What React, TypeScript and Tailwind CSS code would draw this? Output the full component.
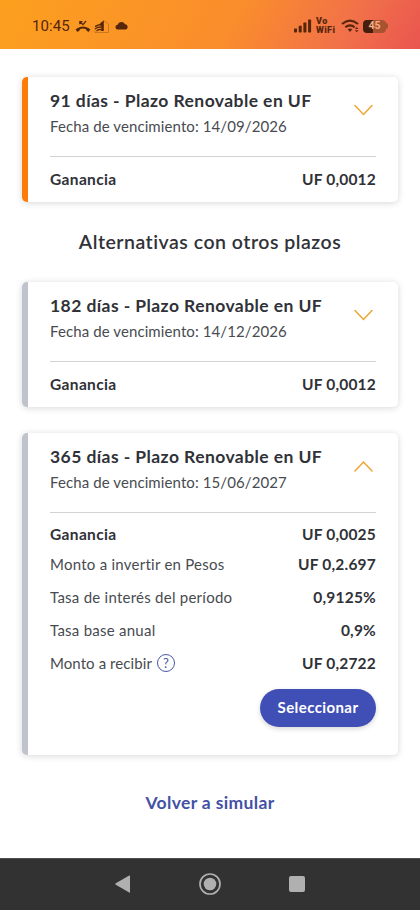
import type { ReactNode } from 'react';

function StatusBar() {
  return (
    <header className="flex h-[49px] items-start justify-between bg-[linear-gradient(120deg,#fca01e_0%,#fa8d2c_55%,#f1704a_82%,#e9554f_100%)] pl-8 pr-8 pt-4 text-[#55260c]">
      <div className="flex h-5 items-center">
        <span className="w-[38px] whitespace-nowrap font-[Roboto] text-[15px] leading-5 tracking-[0.1px]">10:45</span>
        <svg className="ml-[5px]" width="16" height="16" viewBox="0 0 16 16" fill="none" stroke="currentColor">
          <path d="M2.5 11.6Q8 7.4 13.5 11.6" strokeWidth="2" />
          <path d="m.8 11.6 2.5-1.7 1.5 2.1-2.3 1.8ZM15.2 11.6l-2.5-1.7-1.5 2.1 2.3 1.8Z" fill="currentColor" strokeWidth=".4" />
          <path d="m5 4 3 2.7 3-3.7M4.8 6.2V3.6h2.7" strokeWidth="1.2" />
        </svg>
        <svg className="ml-[3px]" width="16" height="16" viewBox="0 0 16 16" fill="none" stroke="currentColor">
          <path d="m9 2 5.5 4v8.5H1v-2" stroke="#b86a1c" strokeWidth=".7" />
          <path d="M6.3 5 9.8 2.4V13H7.2V7.5L6.3 8Z" fill="currentColor" stroke="none" />
          <path d="m1 8.6 3-1.5 3-.6M.8 11l3-1.6 3.5-.4M2.5 13l2-1.3 3-.2" strokeWidth="1.3" />
        </svg>
        <svg className="ml-[5px]" width="14" height="10" viewBox="0 0 14 10" fill="currentColor">
          <path d="M3 8.5a2.3 2.3 0 0 1-.4-4.7A4 4 0 0 1 10 3.3a2.7 2.7 0 0 1 1 5.2Z" />
        </svg>
      </div>
      <div className="flex h-5 items-center">
        <svg width="18" height="14" viewBox="0 0 18 14" fill="currentColor">
          <rect x="0" y="9.5" width="3" height="4" rx=".7" />
          <rect x="4.7" y="6.8" width="3" height="6.7" rx=".7" />
          <rect x="9.4" y="3.6" width="3" height="9.9" rx=".7" />
          <rect x="14.1" y=".5" width="3" height="13" rx=".7" />
        </svg>
        <div className="ml-1 flex w-[22px] flex-col whitespace-nowrap pb-px font-[Roboto] text-[9px] font-black leading-[9px] tracking-[0.4px]">
          <span>Vo</span>
          <span>WiFi</span>
        </div>
        <svg className="ml-[3px]" width="19" height="14" viewBox="0 0 19 14" fill="none" stroke="currentColor">
          <path d="M1 5Q9-1.8 17 5M4.3 8.3Q9 4.5 13.7 8.3" strokeWidth="2.1" />
          <path d="M6.7 10.2Q9 8.6 11.3 10.2L9 13Z" fill="currentColor" stroke="none" />
          <path d="m14 10 1.7-2 1.7 2ZM14 11.3l1.7 2 1.7-2Z" fill="currentColor" stroke="none" />
        </svg>
        <div className="ml-[3px] flex items-center">
          <span className="flex h-[13px] w-[23px] items-center justify-center rounded-[4px] bg-[linear-gradient(90deg,#431e0c_45%,#a75331_45%)] font-[Roboto] text-[10.5px] font-bold leading-none text-[#f5ad82]">45</span>
          <span className="h-[6px] w-[2px] rounded-r-full bg-[#a75331]" />
        </div>
      </div>
    </header>
  );
}

function Row({ label, value, strong = false }: { label: ReactNode; value: string; strong?: boolean }) {
  return (
    <div className="flex items-center justify-between whitespace-nowrap text-[15px] leading-5">
      <span className={strong ? 'text-[15.5px] font-bold tracking-[0.35px]' : 'tracking-[0.25px] text-[#484b50]'}>{label}</span>
      <span className="text-[15.5px] font-bold tracking-[0.2px]">{value}</span>
    </div>
  );
}

type CardProps = { days: string; date: string; gain: string; active?: boolean; open?: boolean; children?: ReactNode };

function Card({ days, date, gain, active = false, open = false, children }: CardProps) {
  return (
    <section className={`rounded-[5px] border-l-[6px] bg-white pl-[22px] pr-[22px] pt-[11px] shadow-[0_1px_7px_rgba(0,0,0,0.16)] ${active ? 'border-[#fd7c08]' : 'border-[#bfc4cc]'} ${open ? 'h-[322px]' : 'h-[125px]'}`}>
      <div className="flex h-[69px] justify-between border-b border-[#d2d3d5]">
        <div className="whitespace-nowrap">
          <h2 className="text-[17.5px] font-bold leading-[26px] tracking-[0.42px]">{days} días - Plazo Renovable en UF</h2>
          <p className="text-[15px] leading-[24px] tracking-[0.1px] text-[#484b50]">Fecha de vencimiento: {date}</p>
        </div>
        <svg className="mr-[3.5px] mt-4 shrink-0" width="19" height="12" viewBox="0 0 19 12" fill="none" stroke="#eda532" strokeWidth="1.5" strokeLinecap="round">
          <path d={open ? 'm1 11 8.5-9L18 11' : 'm1 1.5 8.5 9 8.5-9'} />
        </svg>
      </div>
      <div className={open ? 'pt-[11px]' : 'pt-3'}>
        <Row label="Ganancia" value={gain} strong />
      </div>
      {children}
    </section>
  );
}

export default function App() {
  return (
    <div className="flex h-[910px] w-[420px] flex-col overflow-hidden bg-white font-[Lato,sans-serif] text-[#303238]">
      <StatusBar />
      <main className="flex-1 px-[22px] pt-7">
        <Card days="91" date="14/09/2026" gain="UF 0,0012" active />
        <h1 className="flex h-20 items-center justify-center whitespace-nowrap pb-px text-[19.5px] font-semibold tracking-[0.5px]">Alternativas con otros plazos</h1>
        <Card days="182" date="14/12/2026" gain="UF 0,0012" />
        <div className="h-[26px]" />
        <Card days="365" date="15/06/2027" gain="UF 0,0025" open>
          <div className="mt-[10px] flex flex-col gap-[13px]">
            <Row label="Monto a invertir en Pesos" value="UF 0,2.697" />
            <Row label="Tasa de interés del período" value="0,9125%" />
            <Row label="Tasa base anual" value="0,9%" />
            <Row
              label={
                <span className="flex items-center gap-[5px] tracking-[0.08px]">
                  Monto a recibir
                  <span className="flex size-[18px] items-center justify-center rounded-full border-[1.3px] border-[#4a57a8] text-[13px] leading-none tracking-normal text-[#4a57a8]">?</span>
                </span>
              }
              value="UF 0,2722"
            />
          </div>
          <div className="mt-4 flex justify-end">
            <button className="h-[38px] w-[116px] rounded-full bg-[#3f4fb5] pb-px text-[15px] font-bold tracking-[0.4px] text-white shadow-[0_2px_5px_rgba(0,0,0,0.16)]">Seleccionar</button>
          </div>
        </Card>
        <div className="flex h-[97px] items-center justify-center">
          <a className="whitespace-nowrap text-[17.5px] font-bold tracking-[0.35px] text-[#4351a5]">Volver a simular</a>
        </div>
      </main>
      <nav className="flex h-[52px] items-center justify-between border-t border-[#505050] bg-[#323232] pb-[2px] pl-[115px] pr-[115px] text-[#b0b0b0]">
        <svg width="16" height="20" viewBox="0 0 16 20" fill="currentColor"><path d="M14.2 1.6Q15 1 15 2v16q0 1-.8.4L.8 10.7q-1-.7 0-1.4Z" /></svg>
        <svg width="22" height="22" viewBox="0 0 22 22" fill="none" stroke="currentColor"><circle cx="11" cy="11" r="10" strokeWidth="1.7" /><circle cx="11" cy="11" r="6.3" fill="currentColor" stroke="none" /></svg>
        <span className="size-4 rounded-[2px] bg-[#b0b0b0]" />
      </nav>
    </div>
  );
}
